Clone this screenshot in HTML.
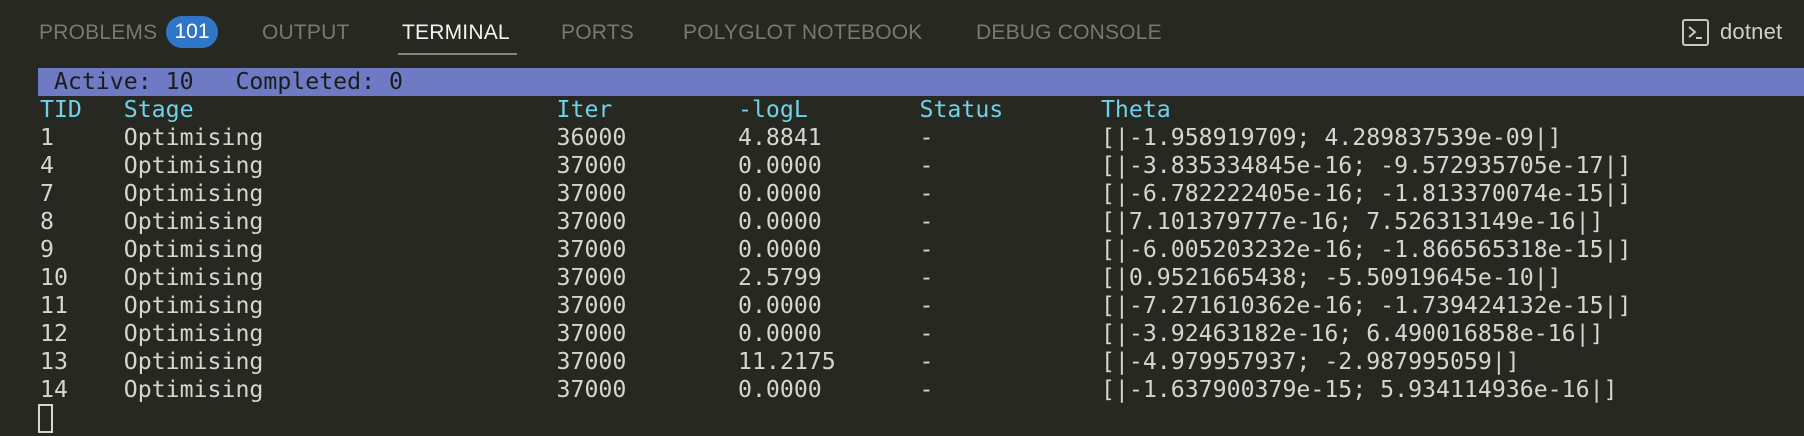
<!DOCTYPE html>
<html><head><meta charset="utf-8"><style>
html,body{margin:0;padding:0;}
body{width:1804px;height:436px;background:#272822;position:relative;overflow:hidden;font-family:"Liberation Sans",sans-serif;}
.tab{position:absolute;top:21px;font-size:21px;line-height:24px;color:#7a796a;letter-spacing:0.2px;white-space:nowrap;}
.act{color:#f4f4ee;}
.badge{position:absolute;left:166px;top:16px;width:52px;height:32px;border-radius:16px;background:#2f76c8;color:#fff;font-size:21px;line-height:32px;text-align:center;}
.ul{position:absolute;left:398px;top:53px;width:119px;height:2px;background:#8a8671;}
pre{position:absolute;left:40px;top:68px;margin:0;font-family:"DejaVu Sans Mono","Liberation Mono",monospace;font-size:23.2px;line-height:28px;color:#d6d6d0;}
.bar{position:absolute;left:38px;top:68px;right:0;height:28px;background:#6e7bc4;}
.bt{color:#1c1c1c;}
.h{color:#6fd2e8;}
.cur{position:absolute;left:38px;top:404px;width:11px;height:25px;border:2px solid #d6d6d0;}
.icon{position:absolute;left:1682px;top:19px;width:23px;height:23px;border:2px solid #c8c8c2;border-radius:3px;}
</style></head><body>
<div class="tab" style="left:39px">PROBLEMS</div>
<div class="badge">101</div>
<div class="tab" style="left:262px">OUTPUT</div>
<div class="tab act" style="left:402px">TERMINAL</div>
<div class="ul"></div>
<div class="tab" style="left:561px">PORTS</div>
<div class="tab" style="left:683px">POLYGLOT NOTEBOOK</div>
<div class="tab" style="left:976px">DEBUG CONSOLE</div>
<div class="icon"><svg width="23" height="23" viewBox="0 0 23 23" style="position:absolute;left:0;top:0"><path d="M5 6 L11 11 L5 16" fill="none" stroke="#c8c8c2" stroke-width="2"/><path d="M12 17 H18" stroke="#c8c8c2" stroke-width="2"/></svg></div>
<div class="tab" style="left:1720px;top:20px;color:#d0d0ca;font-size:22px">dotnet</div>
<div class="bar"></div>
<pre><span class="bt"> Active: 10   Completed: 0</span>
<span class="h">TID   Stage                          Iter         -logL        Status       Theta</span>
1     Optimising                     36000        4.8841       -            [|-1.958919709; 4.289837539e-09|]
4     Optimising                     37000        0.0000       -            [|-3.835334845e-16; -9.572935705e-17|]
7     Optimising                     37000        0.0000       -            [|-6.782222405e-16; -1.813370074e-15|]
8     Optimising                     37000        0.0000       -            [|7.101379777e-16; 7.526313149e-16|]
9     Optimising                     37000        0.0000       -            [|-6.005203232e-16; -1.866565318e-15|]
10    Optimising                     37000        2.5799       -            [|0.9521665438; -5.50919645e-10|]
11    Optimising                     37000        0.0000       -            [|-7.271610362e-16; -1.739424132e-15|]
12    Optimising                     37000        0.0000       -            [|-3.92463182e-16; 6.490016858e-16|]
13    Optimising                     37000        11.2175      -            [|-4.979957937; -2.987995059|]
14    Optimising                     37000        0.0000       -            [|-1.637900379e-15; 5.934114936e-16|]</pre>
<div class="cur"></div>
</body></html>
